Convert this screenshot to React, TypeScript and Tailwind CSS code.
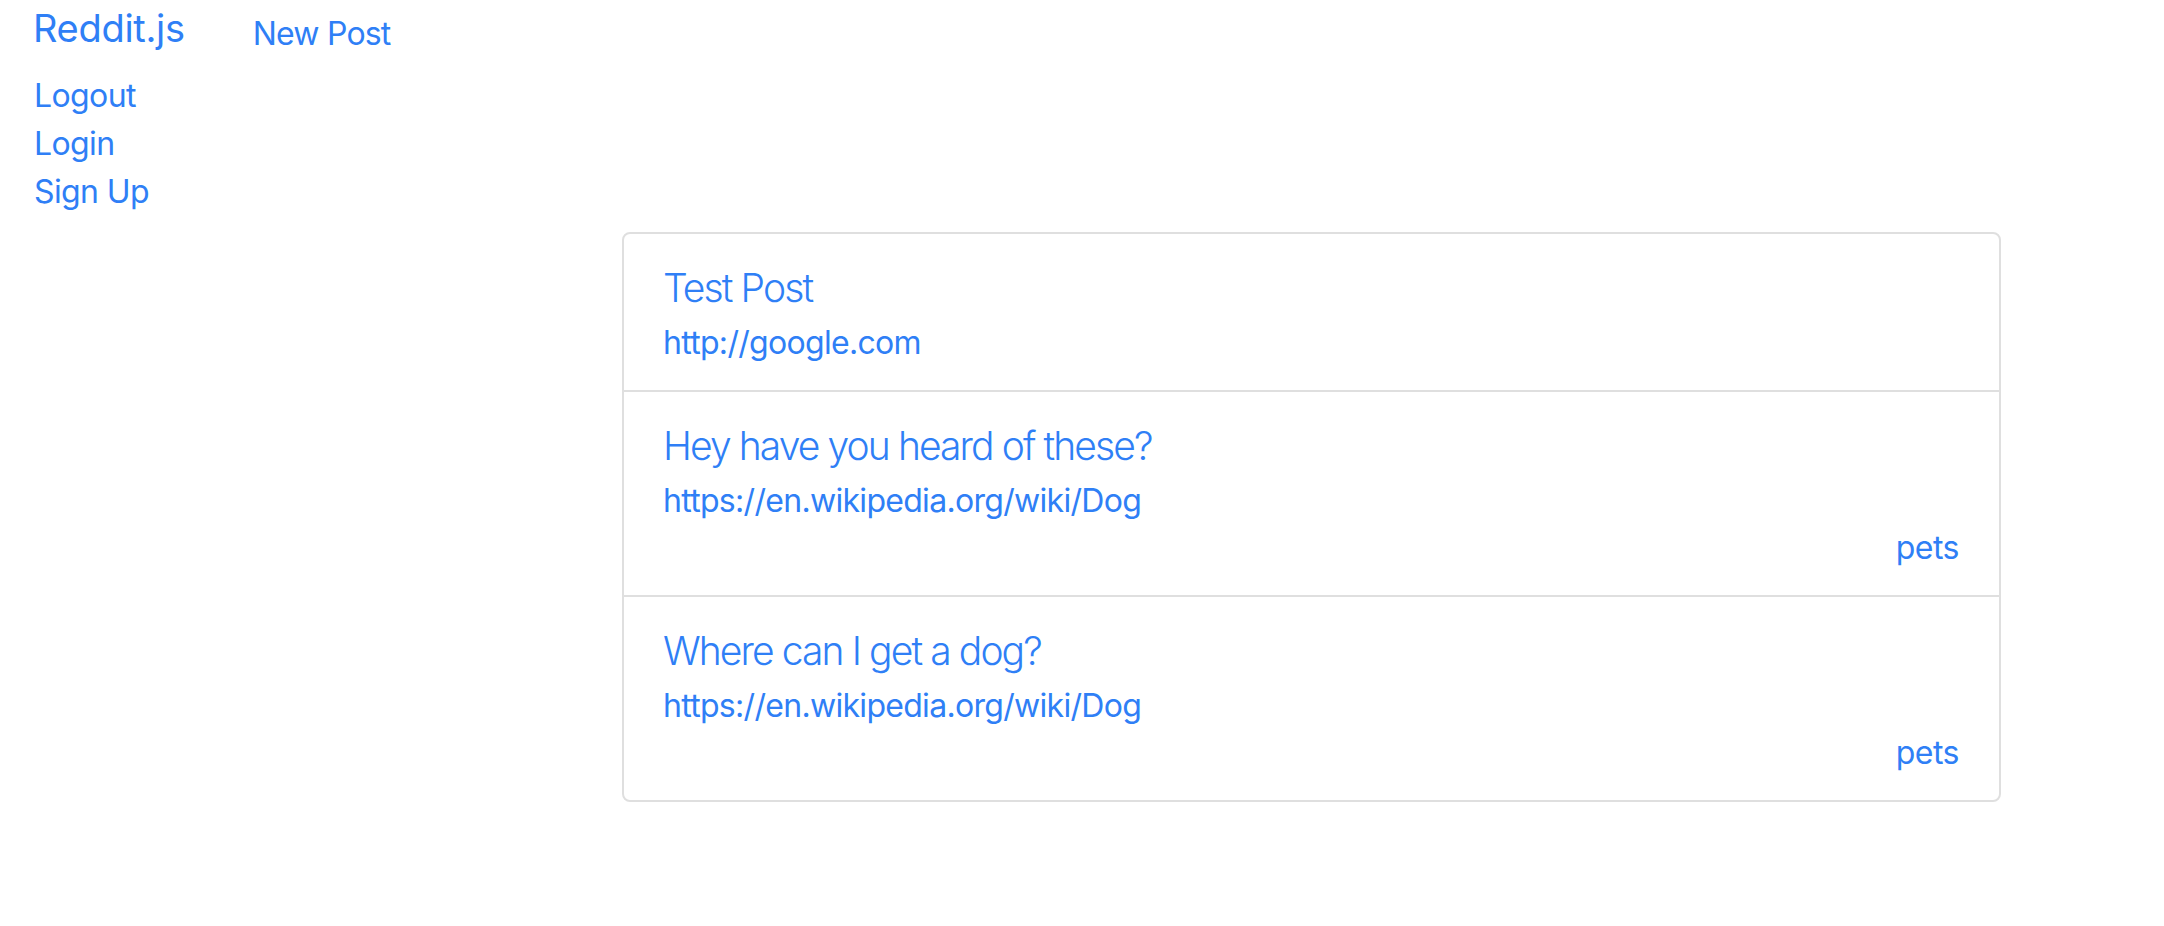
import React from "react";

const posts = [
  { title: "Test Post", url: "http://google.com", sub: "" },
  { title: "Hey have you heard of these?", url: "https://en.wikipedia.org/wiki/Dog", sub: "pets" },
  { title: "Where can I get a dog?", url: "https://en.wikipedia.org/wiki/Dog", sub: "pets" },
];

export default function App() {
  return (
    <div className="min-h-[926px] w-full bg-white font-['Inter',sans-serif] text-[#2f7ff6]">
      <nav className="flex items-start pl-[33px]">
        <a className="text-[38px] leading-[48px] mt-[4px] tracking-[-0.3px]">Reddit.js</a>
        <a className="ml-[68px] mt-[10px] text-[32px] leading-[48px] tracking-[-0.8px]">New Post</a>
      </nav>
      <ul className="flex flex-col pl-[34px] mt-[14px] tracking-[-0.6px]">
        <li className="text-[32px] leading-[48px]">Logout</li>
        <li className="text-[32px] leading-[48px]">Login</li>
        <li className="text-[32px] leading-[48px]">Sign Up</li>
      </ul>
      <div className="ml-[622px] mt-[16px] w-[1379px] rounded-[8px] border-2 border-[#dfdfdf]">
        {posts.map((p, i) => (
          <div
            key={i}
            className={
              "flex flex-col pl-[39px] pr-[40px] pt-[30px] " +
              (i > 0 ? "border-t-2 border-[#dfdfdf] " : "") +
              (p.sub ? "pb-[23px]" : "pb-[23px]")
            }
          >
            <div className="text-[39px] leading-[48px] font-light tracking-[-1.9px]">{p.title}</div>
            <div className="mt-[7px] text-[32px] leading-[48px] tracking-[-0.7px]">{p.url}</div>
            {p.sub && (
              <div className="-mt-[1px] text-right text-[32px] leading-[48px] tracking-[-0.5px]">{p.sub}</div>
            )}
          </div>
        ))}
      </div>
    </div>
  );
}
